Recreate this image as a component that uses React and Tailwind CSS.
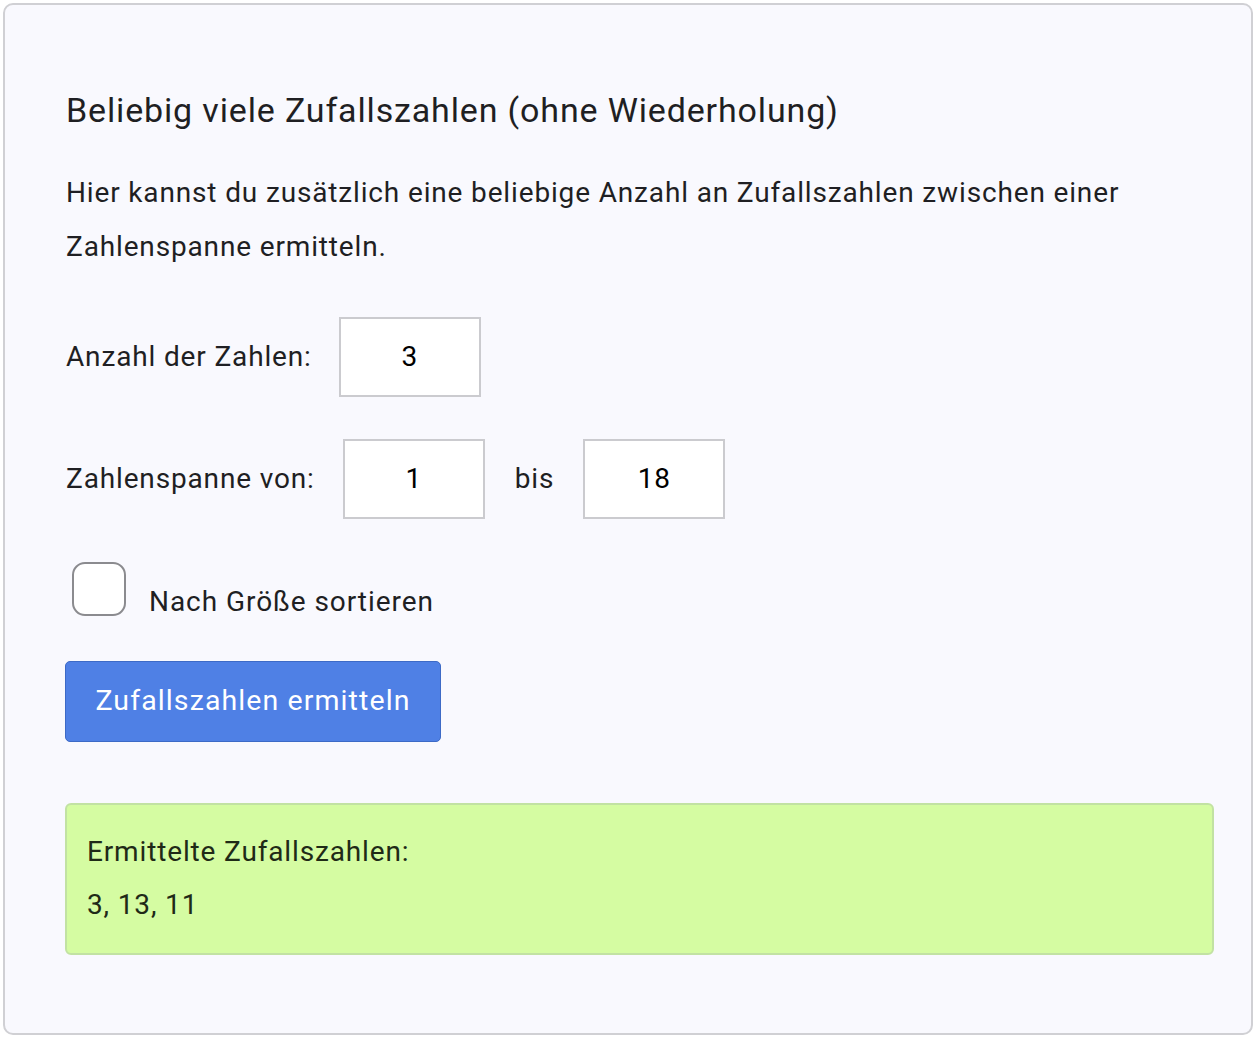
import React from "react";

function NumberBox({ value }) {
  return (
    <div className="w-[142px] h-[80px] bg-white border-2 border-[#cbcbcf] flex items-center justify-center text-[28px] text-black">
      {value}
    </div>
  );
}

export default function App() {
  return (
    <div className="w-full min-h-[1040px] bg-white tracking-[0.85px]" style={{ fontFamily: "Roboto, 'Liberation Sans', sans-serif" }}>
      <div className="ml-[3px] mt-[3px] w-[1250px] h-[1032px] border-2 border-[#d0d0d4] rounded-[10px] bg-[#f9f9fe] pl-[61px] pt-[85px] text-[#1f1f23]">
        <h2 className="text-[34px] leading-[40px]">Beliebig viele Zufallszahlen (ohne Wiederholung)</h2>

        <p className="mt-[36px] text-[28px] leading-[54px] w-[1120px]">
          Hier kannst du zusätzlich eine beliebige Anzahl an Zufallszahlen zwischen einer Zahlenspanne ermitteln.
        </p>

        <div className="mt-[43px] flex items-center gap-[27px] text-[28px]">
          <span>Anzahl der Zahlen:</span>
          <NumberBox value="3" />
        </div>

        <div className="mt-[42px] flex items-center text-[28px]">
          <span>Zahlenspanne von:</span>
          <div className="ml-[28px]">
            <NumberBox value="1" />
          </div>
          <span className="ml-[30px]">bis</span>
          <div className="ml-[29px]">
            <NumberBox value="18" />
          </div>
        </div>

        <div className="mt-[43px] flex items-start">
          <div className="ml-[6px] w-[54px] h-[54px] rounded-[13px] border-2 border-[#8b8b8f] bg-white" />
          <span className="ml-[23px] mt-[20px] text-[28px] leading-[40px] tracking-[0.95px]">Nach Größe sortieren</span>
        </div>

        <button className="mt-[39px] -ml-px w-[376px] h-[81px] rounded-[5px] bg-[#4f80e5] border border-[#3d6ac6] text-white text-[28.5px] tracking-[1.1px] flex items-center justify-center">
          Zufallszahlen ermitteln
        </button>

        <div className="mt-[61px] -ml-px w-[1149px] h-[152px] rounded-[6px] bg-[#d5fca2] border-2 border-[#c2e2a3] pl-[20px] pt-[20px] text-[28px] leading-[53px] text-[#1f2a17]">
          <div>Ermittelte Zufallszahlen:</div>
          <div>3, 13, 11</div>
        </div>
      </div>
    </div>
  );
}
